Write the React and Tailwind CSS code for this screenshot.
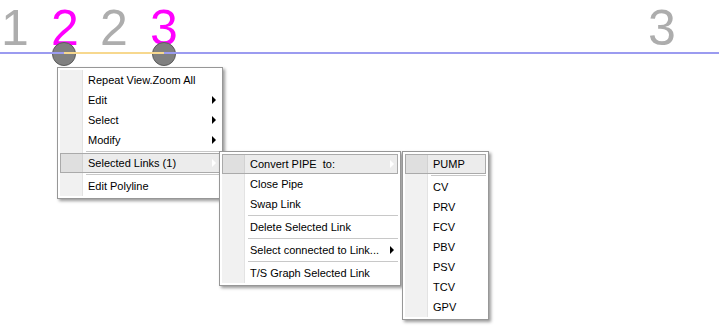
import React from "react";

const menuFont = { fontFamily: '"Liberation Sans", Arial, sans-serif' };

function Arrow({ light }) {
  return (
    <span
      className={
        "absolute right-[4px] top-1/2 -translate-y-1/2 w-0 h-0 border-y-[4px] border-y-transparent border-l-[4px] " +
        (light ? "border-l-white" : "border-l-black")
      }
    />
  );
}

function Row({ label, arrow, active }) {
  return (
    <div className="relative h-[20px] flex items-center pl-[28px] pr-4 text-[11px] text-black whitespace-pre">
      {active ? (
        <div className="absolute inset-0 border border-[#aaaaaa] bg-[rgba(0,0,0,0.075)]" />
      ) : null}
      <span className="relative pt-[1px]">{label}</span>
      {arrow ? <Arrow light={active} /> : null}
    </div>
  );
}

function Sep() {
  return (
    <div className="h-[3px] pl-[26px] flex items-center">
      <div className="h-px w-full bg-[#c8c8c8]" />
    </div>
  );
}

function Menu({ className, items }) {
  return (
    <div
      className={
        "absolute border border-[#979797] bg-white p-[2px] shadow-[2px_2px_3px_rgba(0,0,0,0.4)] " +
        className
      }
      style={menuFont}
    >
      <div className="relative flex flex-col">
        <div className="absolute inset-y-0 left-0 w-[23px] bg-[#f1f1f1] border-r border-[#e3e3e3]" />
        {items.map((it, i) =>
          it === "-" ? (
            <Sep key={i} />
          ) : (
            <Row key={i} label={it.label} arrow={it.arrow} active={it.active} />
          )
        )}
      </div>
    </div>
  );
}

const numFont = { fontFamily: '"Liberation Sans", Arial, sans-serif' };

const labels = [
  { t: "1", x: 1, c: "text-[#adadad]" },
  { t: "2", x: 51, c: "text-[#ff00ff]" },
  { t: "2", x: 100, c: "text-[#adadad]" },
  { t: "3", x: 150, c: "text-[#ff00ff]" },
  { t: "3", x: 648, c: "text-[#adadad]" },
];

export default function App() {
  return (
    <div className="relative w-[719px] h-[331px] bg-white overflow-hidden">
      {/* node labels */}
      {labels.map((n, i) => (
        <span
          key={i}
          className={"absolute top-[3px] text-[50px] leading-none " + n.c}
          style={{ ...numFont, left: n.x }}
        >
          {n.t}
        </span>
      ))}

      {/* nodes and links */}
      <svg className="absolute left-0 top-[40px]" width="719" height="28" viewBox="0 40 719 28">
        <circle cx="64" cy="54" r="11.5" fill="#808080" stroke="#5c5c5c" strokeWidth="1" />
        <circle cx="164" cy="54" r="11.5" fill="#808080" stroke="#5c5c5c" strokeWidth="1" />
        <line x1="0" y1="53" x2="64" y2="53" stroke="#9b9bf0" strokeWidth="2" />
        <line x1="64" y1="53" x2="164" y2="53" stroke="#f7d88e" strokeWidth="2" />
        <line x1="164" y1="53" x2="719" y2="53" stroke="#9b9bf0" strokeWidth="2" />
      </svg>

      <Menu
        className="left-[57px] top-[67px] w-[166px]"
        items={[
          { label: "Repeat View.Zoom All" },
          { label: "Edit", arrow: true },
          { label: "Select", arrow: true },
          { label: "Modify", arrow: true },
          "-",
          { label: "Selected Links (1)", arrow: true, active: true },
          "-",
          { label: "Edit Polyline" },
        ]}
      />

      <Menu
        className="left-[219px] top-[151px] w-[182px]"
        items={[
          { label: "Convert PIPE  to:", arrow: true, active: true },
          { label: "Close Pipe" },
          { label: "Swap Link" },
          "-",
          { label: "Delete Selected Link" },
          "-",
          { label: "Select connected to Link...", arrow: true },
          "-",
          { label: "T/S Graph Selected Link" },
        ]}
      />

      <Menu
        className="left-[402px] top-[151px] w-[87px]"
        items={[
          { label: "PUMP", active: true },
          "-",
          { label: "CV" },
          { label: "PRV" },
          { label: "FCV" },
          { label: "PBV" },
          { label: "PSV" },
          { label: "TCV" },
          { label: "GPV" },
        ]}
      />
    </div>
  );
}
